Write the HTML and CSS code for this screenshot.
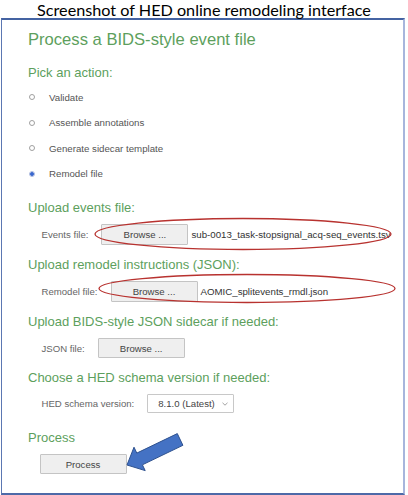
FILE: index.html
```html
<!DOCTYPE html>
<html lang="en">
<head>
<meta charset="utf-8">
<title>HED remodeling interface</title>
<link rel="stylesheet" href="styles.css">
</head>
<body>
<div class="caption">Screenshot of HED online remodeling interface</div>
<div class="frame">
  <h1 class="title">Process a BIDS-style event file</h1>

  <h2 class="section first">Pick an action:</h2>
  <div class="radios">
    <label class="radio"><input type="radio" name="act"><span>Validate</span></label>
    <label class="radio"><input type="radio" name="act"><span>Assemble annotations</span></label>
    <label class="radio"><input type="radio" name="act"><span>Generate sidecar template</span></label>
    <label class="radio"><input type="radio" name="act" checked><span>Remodel file</span></label>
  </div>

  <h2 class="section s-events">Upload events file:</h2>
  <div class="row row-tall">
    <span class="lbl">Events file:</span>
    <span class="file"><button class="btn btn-tall" type="button">Browse ...</button><span class="fname">sub-0013_task-stopsignal_acq-seq_events.tsv</span></span>
  </div>

  <h2 class="section s-next">Upload remodel instructions (JSON):</h2>
  <div class="row row-tall">
    <span class="lbl">Remodel file:</span>
    <span class="file"><button class="btn btn-tall" type="button">Browse ...</button><span class="fname">AOMIC_splitevents_rmdl.json</span></span>
  </div>

  <h2 class="section s-next">Upload BIDS-style JSON sidecar if needed:</h2>
  <div class="row">
    <span class="lbl">JSON file:</span>
    <span class="file"><button class="btn" type="button">Browse ...</button></span>
  </div>

  <h2 class="section s-next">Choose a HED schema version if needed:</h2>
  <div class="row row-select">
    <span class="lbl">HED schema version:</span>
    <span class="select"><span class="sel-text">8.1.0 (Latest)</span><svg class="chev" width="6" height="4" viewBox="0 0 6 4"><path d="M0.5 0.8 L3 3.2 L5.5 0.8" fill="none" stroke="#999" stroke-width="0.9"/></svg></span>
  </div>

  <h2 class="section s-process">Process</h2>
  <div class="process-row">
    <button class="btn" type="button">Process</button>
  </div>
</div>

<svg class="annot" width="408" height="495" viewBox="0 0 408 495">
  <ellipse cx="243" cy="234" rx="148" ry="15.5" fill="none" stroke="#b8322f" stroke-width="1.3"/>
  <ellipse cx="247" cy="288.5" rx="148" ry="14" fill="none" stroke="#b8322f" stroke-width="1.3"/>
  <polygon points="127,465 134,447.2 136.8,453.1 177.3,433.6 182.9,445.3 142.4,464.8 145.2,470.6" fill="#4472c4" stroke="#2f528f" stroke-width="1"/>
</svg>
</body>
</html>
```

FILE: styles.css
```css
html, body {
  margin: 0;
  padding: 0;
  background: #ffffff;
}

body {
  position: relative;
  width: 408px;
  height: 495px;
  overflow: hidden;
  font-family: "Liberation Sans", Arial, sans-serif;
}

.caption {
  height: 18px;
  line-height: 19px;
  text-align: center;
  font-family: Lato, "Open Sans", sans-serif;
  font-size: 16.2px;
  color: #000;
  white-space: nowrap;
}

.frame {
  margin-left: 1px;
  width: 375px;
  border-top: 2px solid #4463a2;
  border-left: 1.5px solid #5b77b2;
  border-right: 2.5px solid #a7b5dc;
  border-bottom: 2px solid #4d6aa8;
  padding: 0 0 19px 26px;
  box-sizing: content-box;
}

.title {
  margin: 10px 0 0 0;
  font-size: 16.6px;
  line-height: 20px;
  font-weight: normal;
  color: #5d9f5d;
}

.section {
  margin: 12px 0 0 0;
  font-size: 13px;
  line-height: 16px;
  font-weight: normal;
  color: #5d9f5d;
}

.section.first { margin-top: 15px; }
.section.s-events { margin-top: 13.5px; }
.section.s-next { margin-top: 12px; }
.section.s-process { margin-top: 17px; }

.radios {
  margin-top: 3.5px;
  display: flex;
  flex-direction: column;
  padding-left: 1px;
}

.radio {
  height: 25.5px;
  display: flex;
  align-items: center;
  gap: 14px;
  font-size: 9.7px;
  color: #555;
}

.radio input {
  appearance: none;
  -webkit-appearance: none;
  margin: 0;
  width: 6px;
  height: 6px;
  border: 1px solid #a0a0a0;
  border-radius: 50%;
  box-sizing: border-box;
  background: #fff;
}

.radio input:checked {
  border-color: #aab8de;
  background: radial-gradient(circle, #3a68cf 0 1.8px, #c9d4ef 2.2px);
}

.row {
  margin-top: 8px;
  display: flex;
  align-items: center;
  gap: 13px;
  padding-left: 13.5px;
  height: 20px;
}

.row-tall { height: 21px; }
.row-select { height: 19px; }

.lbl {
  font-size: 9.6px;
  color: #666;
  white-space: nowrap;
}

.file {
  display: flex;
  align-items: center;
  gap: 3px;
}

.btn {
  width: 87px;
  height: 20px;
  margin: 0;
  padding: 0;
  border: 1px solid #c4c4c4;
  border-radius: 1px;
  background: #efefef;
  font-family: "Liberation Sans", Arial, sans-serif;
  font-size: 9.6px;
  color: #444;
  box-sizing: border-box;
}

.btn-tall { height: 21px; }

.fname {
  font-size: 9.7px;
  color: #333;
  white-space: nowrap;
}

.select {
  position: relative;
  width: 87px;
  height: 19px;
  border: 1px solid #c8c8c8;
  border-radius: 1px;
  background: #fff;
  box-sizing: border-box;
  display: flex;
  align-items: center;
  font-size: 9.6px;
  color: #444;
}

.sel-text {
  margin-left: 10px;
}

.chev {
  position: absolute;
  right: 5px;
  top: 7px;
}

.process-row {
  margin-top: 8px;
  padding-left: 11.5px;
  display: flex;
}

.annot {
  position: absolute;
  left: 0;
  top: 0;
  pointer-events: none;
}
```
